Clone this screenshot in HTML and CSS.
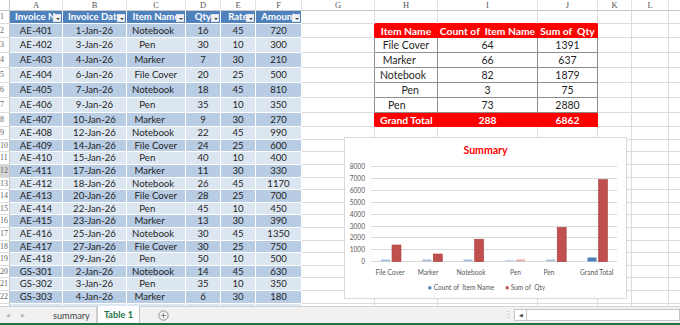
FILE: index.html
```html
<!DOCTYPE html>
<html>
<head>
	<title>Invoices - Table 1</title>
	<link rel="stylesheet" href="styles.css">
</head>
<body>
<div class="sheet">
	<table class="grid">
		<colgroup>
			<col class="c-rh"><col class="c-a"><col class="c-b"><col class="c-c"><col class="c-d"><col class="c-e"><col class="c-f">
			<col class="c-g"><col class="c-h"><col class="c-i"><col class="c-j"><col class="c-k"><col class="c-l"><col class="c-m">
		</colgroup>
		<tr class="cols"><th></th><th>A</th><th>B</th><th>C</th><th>D</th><th>E</th><th>F</th><th>G</th><th>H</th><th>I</th><th>J</th><th>K</th><th>L</th><th></th></tr>
		<tr class="r13 head"><th>1</th><td>Invoice No<span class="dd"></span></td><td>Invoice Date<span class="dd"></span></td><td>Item Name<span class="dd"></span></td><td>Qty<span class="dd"></span></td><td>Rate<span class="dd"></span></td><td>Amount<span class="dd"></span></td><td></td><td class="pt"></td><td class="pt"></td><td class="pt"></td><td></td><td></td><td></td></tr>
		<tr class="r14 dk"><th>2</th><td>AE-401</td><td>1-Jan-26</td><td class="l">Notebook</td><td>16</td><td>45</td><td>720</td><td class="er"></td><td class="pr">Item Name</td><td class="pr">Count of  Item Name</td><td class="pr">Sum of  Qty</td><td></td><td></td><td></td></tr>
		<tr class="r15 lt"><th>3</th><td>AE-402</td><td>3-Jan-26</td><td class="l">   Pen</td><td>30</td><td>10</td><td>300</td><td class="eg"></td><td class="pv l"> File Cover</td><td class="pv">64</td><td class="pv">1391</td><td></td><td></td><td></td></tr>
		<tr class="r15 dk"><th>4</th><td>AE-403</td><td>4-Jan-26</td><td class="l"> Marker</td><td>7</td><td>30</td><td>210</td><td class="eg"></td><td class="pv l"> Marker</td><td class="pv">66</td><td class="pv">637</td><td></td><td></td><td></td></tr>
		<tr class="r15 lt"><th>5</th><td>AE-404</td><td>6-Jan-26</td><td class="l"> File Cover</td><td>20</td><td>25</td><td>500</td><td class="eg"></td><td class="pv l">Notebook</td><td class="pv">82</td><td class="pv">1879</td><td></td><td></td><td></td></tr>
		<tr class="r15 dk"><th>6</th><td>AE-405</td><td>7-Jan-26</td><td class="l">Notebook</td><td>18</td><td>45</td><td>810</td><td class="eg"></td><td class="pv l">        Pen</td><td class="pv">3</td><td class="pv">75</td><td></td><td></td><td></td></tr>
		<tr class="r15 lt"><th>7</th><td>AE-406</td><td>9-Jan-26</td><td class="l">   Pen</td><td>35</td><td>10</td><td>350</td><td class="eg"></td><td class="pv l">   Pen</td><td class="pv">73</td><td class="pv">2880</td><td></td><td></td><td></td></tr>
		<tr class="r14 dk"><th>8</th><td>AE-407</td><td>10-Jan-26</td><td class="l"> Marker</td><td>9</td><td>30</td><td>270</td><td class="er"></td><td class="pr l">Grand Total</td><td class="pr">288</td><td class="pr">6862</td><td></td><td></td><td></td></tr>
		<tr class="r13 lt"><th>9</th><td>AE-408</td><td>12-Jan-26</td><td class="l">Notebook</td><td>22</td><td>45</td><td>990</td><td></td><td></td><td></td><td></td><td></td><td></td><td></td></tr>
		<tr class="r12 dk"><th>10</th><td>AE-409</td><td>14-Jan-26</td><td class="l"> File Cover</td><td>24</td><td>25</td><td>600</td><td></td><td></td><td></td><td></td><td></td><td></td><td></td></tr>
		<tr class="r13 lt"><th>11</th><td>AE-410</td><td>15-Jan-26</td><td class="l">   Pen</td><td>40</td><td>10</td><td>400</td><td></td><td></td><td></td><td></td><td></td><td></td><td></td></tr>
		<tr class="r13 dk"><th class="sel">12</th><td>AE-411</td><td>17-Jan-26</td><td class="l"> Marker</td><td>11</td><td>30</td><td>330</td><td></td><td></td><td></td><td></td><td></td><td></td><td></td></tr>
		<tr class="r12 lt"><th>13</th><td>AE-412</td><td>18-Jan-26</td><td class="l">Notebook</td><td>26</td><td>45</td><td>1170</td><td></td><td></td><td></td><td></td><td></td><td></td><td></td></tr>
		<tr class="r13 dk"><th>14</th><td>AE-413</td><td>20-Jan-26</td><td class="l"> File Cover</td><td>28</td><td>25</td><td>700</td><td></td><td></td><td></td><td></td><td></td><td></td><td></td></tr>
		<tr class="r12 lt"><th>15</th><td>AE-414</td><td>22-Jan-26</td><td class="l">   Pen</td><td>45</td><td>10</td><td>450</td><td></td><td></td><td></td><td></td><td></td><td></td><td></td></tr>
		<tr class="r13 dk"><th>16</th><td>AE-415</td><td>23-Jan-26</td><td class="l"> Marker</td><td>13</td><td>30</td><td>390</td><td></td><td></td><td></td><td></td><td></td><td></td><td></td></tr>
		<tr class="r13 lt"><th>17</th><td>AE-416</td><td>25-Jan-26</td><td class="l">Notebook</td><td>30</td><td>45</td><td>1350</td><td></td><td></td><td></td><td></td><td></td><td></td><td></td></tr>
		<tr class="r12 dk"><th>18</th><td>AE-417</td><td>27-Jan-26</td><td class="l"> File Cover</td><td>30</td><td>25</td><td>750</td><td></td><td></td><td></td><td></td><td></td><td></td><td></td></tr>
		<tr class="r13 lt"><th>19</th><td>AE-418</td><td>29-Jan-26</td><td class="l">   Pen</td><td>50</td><td>10</td><td>500</td><td></td><td></td><td></td><td></td><td></td><td></td><td></td></tr>
		<tr class="r12 dk"><th>20</th><td>GS-301</td><td>2-Jan-26</td><td class="l">Notebook</td><td>14</td><td>45</td><td>630</td><td></td><td></td><td></td><td></td><td></td><td></td><td></td></tr>
		<tr class="r13 lt"><th>21</th><td>GS-302</td><td>3-Jan-26</td><td class="l">   Pen</td><td>35</td><td>10</td><td>350</td><td></td><td></td><td></td><td></td><td></td><td></td><td></td></tr>
		<tr class="r13 dk"><th>22</th><td>GS-303</td><td>4-Jan-26</td><td class="l"> Marker</td><td>6</td><td>30</td><td>180</td><td></td><td></td><td></td><td></td><td></td><td></td><td></td></tr>
		<tr class="r13 lt"><th>23</th><td>GS-304</td><td>6-Jan-26</td><td class="l"> File Cover</td><td>18</td><td>25</td><td>450</td><td></td><td></td><td></td><td></td><td></td><td></td><td></td></tr>
	</table>

	<div class="chart">
		<svg width="283" height="162" viewBox="0 0 283 162">
			<rect x="0.5" y="0.5" width="282" height="161" fill="#fff" stroke="#d9d9d9"/>
			<text class="title" x="141.5" y="17" text-anchor="middle">Summary</text>
			<g stroke="#d9d9d9" stroke-width="1">
				<line x1="27" x2="273" y1="29.5" y2="29.5"/>
				<line x1="27" x2="273" y1="41.5" y2="41.5"/>
				<line x1="27" x2="273" y1="53.5" y2="53.5"/>
				<line x1="27" x2="273" y1="65.5" y2="65.5"/>
				<line x1="27" x2="273" y1="77.5" y2="77.5"/>
				<line x1="27" x2="273" y1="89.5" y2="89.5"/>
				<line x1="27" x2="273" y1="100.5" y2="100.5"/>
				<line x1="27" x2="273" y1="112.5" y2="112.5"/>
				<line x1="27" x2="273" y1="124.5" y2="124.5"/>
			</g>
			<g class="axis" text-anchor="end">
				<text x="21" y="31.5">8000</text>
				<text x="21" y="43.5">7000</text>
				<text x="21" y="55.5">6000</text>
				<text x="21" y="67.5">5000</text>
				<text x="21" y="79.5">4000</text>
				<text x="21" y="91.5">3000</text>
				<text x="21" y="102.5">2000</text>
				<text x="21" y="114.5">1000</text>
				<text x="21" y="126.5">0</text>
			</g>
			<g>
				<rect x="37" y="122.5" width="9" height="2" fill="#a9bfdc"/>
				<rect x="78.3" y="122.5" width="9" height="2" fill="#a9bfdc"/>
				<rect x="119.6" y="122.5" width="9" height="2" fill="#a9bfdc"/>
				<rect x="160.9" y="123" width="9" height="1.5" fill="#c9d6e8"/>
				<rect x="202.2" y="122.5" width="9" height="2" fill="#a9bfdc"/>
				<rect x="243.5" y="120.5" width="9" height="4" fill="#4f81bd"/>
			</g>
			<g fill="#c0504d" stroke="#a94340" stroke-width="0.6">
				<rect x="48" y="108" width="9" height="16.6"/>
				<rect x="89.3" y="117" width="9" height="7.6"/>
				<rect x="130.6" y="102.2" width="9" height="22.5"/>
				<rect x="213.2" y="90.3" width="9" height="34.4"/>
				<rect x="254.5" y="42.6" width="9" height="82.1"/>
			</g>
			<rect x="171.9" y="122.5" width="9" height="2" fill="#e3aaa9"/>
			<g class="axis" text-anchor="middle">
				<text x="46" y="137.5">File Cover</text>
				<text x="84" y="137.5">Marker</text>
				<text x="127" y="137.5">Notebook</text>
				<text x="171.5" y="137.5">Pen</text>
				<text x="205" y="137.5">Pen</text>
				<text x="252.7" y="137.5">Grand Total</text>
			</g>
			<rect x="84.3" y="149.3" width="3" height="3" fill="#4f81bd"/>
			<text class="axis" x="89.7" y="153" xml:space="preserve">Count of  Item Name</text>
			<rect x="161.7" y="149.3" width="3" height="3" fill="#c0504d"/>
			<text class="axis" x="166.7" y="153" xml:space="preserve">Sum of  Qty</text>
		</svg>
	</div>
</div>

<div class="tabs">
	<span class="nav">&#9664;</span>
	<span class="nav">&#9654;</span>
	<span class="tab">summary</span>
	<span class="tab on">Table 1</span>
	<svg class="add" width="11" height="11" viewBox="0 0 11 11">
		<circle cx="5.5" cy="5.5" r="4.7" fill="none" stroke="#7a7a7a" stroke-width="0.8"/>
		<path d="M5.5 3v5M3 5.5h5" stroke="#7a7a7a" stroke-width="0.8"/>
	</svg>
	<span class="grip">&#8942;</span>
	<span class="sl">&#9664;</span>
	<span class="scroll"></span>
</div>
</body>
</html>
```

FILE: styles.css
```css
body {
	margin: 0;
	width: 680px;
	height: 325px;
	overflow: hidden;
	background: #fff;
	font-family: Lato, "Liberation Sans", sans-serif;
	color: #1f1f1f;
}
.sheet {
	position: relative;
	height: 306px;
	overflow: hidden;
}
.grid {
	border-collapse: separate;
	border-spacing: 0;
	table-layout: fixed;
	width: 720px;
}
.c-rh { width: 10px; }
.c-a { width: 53px; }
.c-b { width: 64px; }
.c-c { width: 59px; }
.c-d { width: 35px; }
.c-e { width: 35px; }
.c-f { width: 46px; }
.c-g { width: 73px; }
.c-h { width: 63px; }
.c-i { width: 100px; }
.c-j { width: 60px; }
.c-k { width: 34px; }
.c-l { width: 37px; }
.c-m { width: 51px; }

.grid td, .grid th {
	border-right: 1px solid #dcdcdc;
	border-bottom: 1px solid #dcdcdc;
	padding: 0;
	overflow: hidden;
	white-space: pre;
	text-align: center;
	font-size: 9.6px;
	line-height: 10px;
}
.grid th {
	font-family: "Liberation Serif", serif;
	font-weight: normal;
	font-size: 8px;
	color: #666;
	background: #fff;
}
.grid tr > th:first-child {
	text-align: left;
	border-right-color: #c6c6c6;
}
.grid th.sel {
	background: #d4d4d4;
	border-right-color: #9c9c9c;
}
.cols { height: 11px; }
.cols th {
	border-bottom-color: #c6c6c6;
	border-right-color: #e2e2e2;
	font-size: 8.5px;
	color: #555;
}
.r15 { height: 15px; }
.r14 { height: 14px; }
.r13 { height: 13px; }
.r12 { height: 12px; }

/* excel table (columns A-F) */
.head td:nth-child(-n+7) {
	position: relative;
	background: #4f81bd;
	color: #fff;
	font-weight: bold;
	padding: 0 5px;
	border-color: #fff;
}
.dk td:nth-child(-n+7) {
	background: #b8cce4;
	border-color: #fff;
}
.lt td:nth-child(-n+7) {
	background: #dce6f1;
	border-color: #fff;
}
.grid td.l {
	text-align: left;
	padding-left: 5px;
}
.dd {
	position: absolute;
	right: 1px;
	top: 3px;
	width: 8px;
	height: 8px;
	background: #f3f3f3;
	box-sizing: border-box;
	border: 1px solid #dde4ee;
}
.dd::after {
	content: "";
	position: absolute;
	left: 1.5px;
	top: 2.5px;
	border-left: 2px solid transparent;
	border-right: 2px solid transparent;
	border-top: 2px solid #444;
}

/* pivot table (columns H-J) */
.grid td.pv {
	font-size: 10.5px;
	border-right-color: #8e8e8e;
	border-bottom-color: #8e8e8e;
}
.grid td.pr {
	font-size: 10.3px;
	font-weight: bold;
	color: #fff;
	background: #ff0000;
	border-right-color: #ff0000;
	border-bottom-color: #ff0000;
}
.grid td.pt { border-bottom-color: #ff0000; }
.grid td.er { border-right-color: #ff0000; }
.grid td.eg { border-right-color: #8e8e8e; }

/* chart */
.chart {
	position: absolute;
	left: 344px;
	top: 137px;
	width: 283px;
	height: 162px;
}
.chart svg { display: block; }
.chart .title {
	font-size: 10.5px;
	font-weight: bold;
	fill: #ff0000;
}
.chart .axis {
	font-size: 6.6px;
	fill: #595959;
}

/* sheet tabs */
.tabs {
	display: flex;
	align-items: center;
	height: 16px;
	background: #f1f1f1;
	border-top: 1px solid #d4d4d4;
	border-bottom: 3px solid #217346;
	font-size: 9.2px;
	color: #444;
}
.nav {
	font-size: 5px;
	line-height: 6px;
	color: #b4b4b4;
	margin-left: 6px;
	width: 6px;
}
.nav + .nav { margin-left: 9px; margin-right: 19px; }
.tab {
	height: 100%;
	display: flex;
	align-items: center;
	padding: 0 6px 0 7px;
	border-right: 1px solid #d0d0d0;
}
.tab.on {
	background: #fff;
	color: #217346;
	font-weight: bold;
	padding: 0 6px;
	height: 17px;
	margin-top: -2px;
	border-left: 1px solid #c6c6c6;
	border-right: 1px solid #c6c6c6;
}
.add { margin-left: 18px; }
.grip {
	margin-left: auto;
	color: #aaa;
	font-size: 9px;
	line-height: 10px;
	width: 8px;
}
.sl {
	font-size: 5px;
	color: #444;
	width: 11px;
	height: 10px;
	line-height: 10px;
	text-align: center;
	margin-left: 2px;
	border: 1px solid #c6c6c6;
	border-right: 0;
	background: #fff;
}
.scroll {
	width: 152px;
	height: 10px;
	background: #fff;
	border: 1px solid #c6c6c6;
}
```
